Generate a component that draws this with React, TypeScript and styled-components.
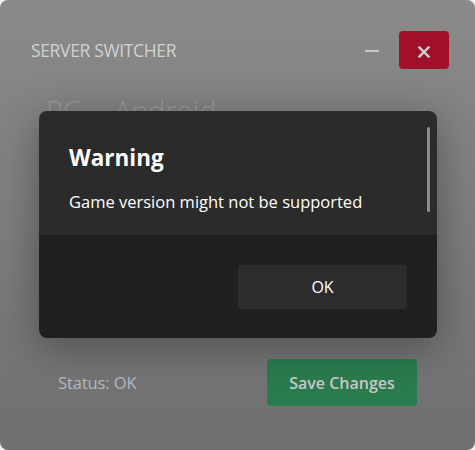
import React from "react";
import styled, { createGlobalStyle } from "styled-components";

const Global = createGlobalStyle`
  html, body { margin: 0; padding: 0; background: #f3f3f3; }
  body { font-family: "Open Sans", "Noto Sans", sans-serif; }
`;

const Window = styled.div`
  position: relative;
  width: 475px;
  height: 450px;
  box-sizing: border-box;
  border-radius: 8px;
  overflow: hidden;
  background: linear-gradient(180deg, #8a8a8a 0%, #7d7d7d 50%, #6f6f6f 100%);
  display: flex;
  flex-direction: column;
`;

const TitleBar = styled.div`
  display: flex;
  align-items: center;
  height: 38px;
  margin-top: 31px;
  padding: 0 26px 0 31px;
`;

const Title = styled.div`
  flex: 1;
  font-size: 17.5px;
  color: #d2d2d2;
  letter-spacing: -0.35px;
`;

const MinButton = styled.div`
  width: 14px;
  height: 1.5px;
  background: #c8c8c8;
  margin-right: 20px;
  margin-top: 2px;
`;

const CloseButton = styled.div`
  width: 50px;
  height: 38px;
  border-radius: 4px;
  background: #a0102a;
  display: flex;
  align-items: center;
  justify-content: center;
  padding-top: 3px;
  box-sizing: border-box;
`;

const Tabs = styled.div`
  display: flex;
  gap: 34px;
  padding: 28px 0 0 46px;
`;

const Tab = styled.div`
  font-size: 28.5px;
  font-weight: 300;
  color: #9b9b9b;
  line-height: 1;
`;

const Spacer = styled.div`
  flex: 1;
`;

const Footer = styled.div`
  display: flex;
  align-items: center;
  justify-content: space-between;
  padding: 0 58px 44px 58px;
`;

const Status = styled.div`
  font-size: 16.5px;
  color: #b4b9c2;
  letter-spacing: -0.1px;
`;

const SaveButton = styled.div`
  width: 150px;
  height: 47px;
  border-radius: 4px;
  background: #2a7b4e;
  color: #c9c9c9;
  font-size: 16px;
  font-weight: 600;
  display: flex;
  align-items: center;
  justify-content: center;
`;

const Overlay = styled.div`
  position: absolute;
  left: 39px;
  top: 111px;
  width: 398px;
  height: 227px;
  border-radius: 8px;
  overflow: hidden;
  display: flex;
  flex-direction: column;
  box-shadow: 0 8px 40px rgba(0, 0, 0, 0.35);
`;

const DialogBody = styled.div`
  position: relative;
  height: 124px;
  box-sizing: border-box;
  background: #2b2b2b;
  padding: 32px 30px 0 30px;
`;

const DialogTitle = styled.div`
  font-size: 22.5px;
  font-weight: 700;
  color: #ffffff;
  line-height: 30px;
`;

const DialogText = styled.div`
  margin-top: 18px;
  font-size: 16.5px;
  color: #ffffff;
  line-height: 22px;
`;

const ScrollThumb = styled.div`
  position: absolute;
  right: 7px;
  top: 16px;
  width: 3px;
  height: 85px;
  border-radius: 2px;
  background: #8c8c8c;
`;

const DialogFooter = styled.div`
  flex: 1;
  background: #202020;
  display: flex;
  justify-content: flex-end;
  align-items: flex-start;
  padding: 30px 30px 0 0;
`;

const OkButton = styled.div`
  width: 169px;
  height: 44px;
  border-radius: 4px;
  background: #2d2d30;
  color: #ffffff;
  font-size: 16px;
  display: flex;
  align-items: center;
  justify-content: center;
`;

export default function App() {
  return (
    <>
      <Global />
      <Window>
        <TitleBar>
          <Title>SERVER SWITCHER</Title>
          <MinButton />
          <CloseButton>
            <svg width="12" height="12" viewBox="0 0 12 12">
              <path d="M1.5 1.5 L10.5 10.5 M10.5 1.5 L1.5 10.5" stroke="#d0d0d0" strokeWidth="2.4" strokeLinecap="square" />
            </svg>
          </CloseButton>
        </TitleBar>
        <Tabs>
          <Tab>PC</Tab>
          <Tab>Android</Tab>
        </Tabs>
        <Spacer />
        <Footer>
          <Status>Status: OK</Status>
          <SaveButton>Save Changes</SaveButton>
        </Footer>
        <Overlay>
          <DialogBody>
            <DialogTitle>Warning</DialogTitle>
            <DialogText>Game version might not be supported</DialogText>
            <ScrollThumb />
          </DialogBody>
          <DialogFooter>
            <OkButton>OK</OkButton>
          </DialogFooter>
        </Overlay>
      </Window>
    </>
  );
}
